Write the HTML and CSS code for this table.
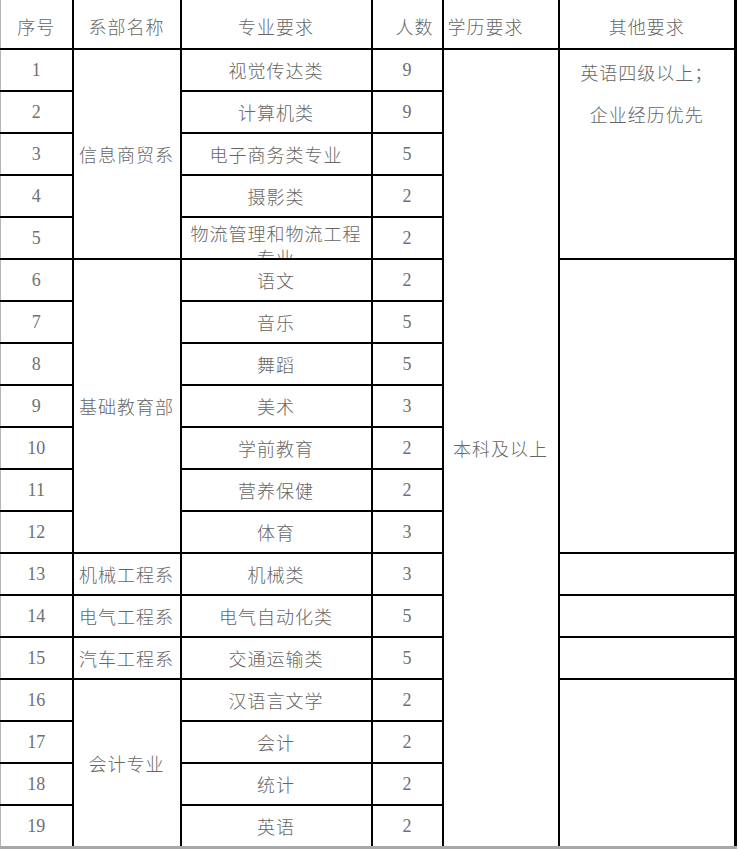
FILE: index.html
```html
<!DOCTYPE html>
<html lang="zh-CN">
<head>
<meta charset="utf-8">
<title>招聘岗位表</title>
<link rel="stylesheet" href="styles.css">
</head>
<body>
<table class="tbl">
  <colgroup>
    <col class="c1"><col class="c2"><col class="c3"><col class="c4"><col class="c5"><col class="c6">
  </colgroup>
  <thead>
    <tr class="head">
      <th>序号</th>
      <th>系部名称</th>
      <th>专业要求</th>
      <th class="h-num">人数</th>
      <th class="h-edu">学历要求</th>
      <th>其他要求</th>
    </tr>
  </thead>
  <tbody>
    <tr><td class="n">1</td><td rowspan="5">信息商贸系</td><td>视觉传达类</td><td class="n">9</td><td rowspan="19">本科及以上</td><td rowspan="5" class="other">英语四级以上；<br>企业经历优先</td></tr>
    <tr><td class="n">2</td><td>计算机类</td><td class="n">9</td></tr>
    <tr><td class="n">3</td><td>电子商务类专业</td><td class="n">5</td></tr>
    <tr><td class="n">4</td><td>摄影类</td><td class="n">2</td></tr>
    <tr><td class="n">5</td><td class="wrap"><div class="clip">物流管理和物流工程专业</div></td><td class="n">2</td></tr>
    <tr><td class="n">6</td><td rowspan="7">基础教育部</td><td>语文</td><td class="n">2</td><td rowspan="7"></td></tr>
    <tr><td class="n">7</td><td>音乐</td><td class="n">5</td></tr>
    <tr><td class="n">8</td><td>舞蹈</td><td class="n">5</td></tr>
    <tr><td class="n">9</td><td>美术</td><td class="n">3</td></tr>
    <tr><td class="n">10</td><td>学前教育</td><td class="n">2</td></tr>
    <tr><td class="n">11</td><td>营养保健</td><td class="n">2</td></tr>
    <tr><td class="n">12</td><td>体育</td><td class="n">3</td></tr>
    <tr><td class="n">13</td><td>机械工程系</td><td>机械类</td><td class="n">3</td><td></td></tr>
    <tr><td class="n">14</td><td>电气工程系</td><td>电气自动化类</td><td class="n">5</td><td></td></tr>
    <tr><td class="n">15</td><td>汽车工程系</td><td>交通运输类</td><td class="n">5</td><td></td></tr>
    <tr><td class="n">16</td><td rowspan="4">会计专业</td><td>汉语言文学</td><td class="n">2</td><td rowspan="4"></td></tr>
    <tr><td class="n">17</td><td>会计</td><td class="n">2</td></tr>
    <tr><td class="n">18</td><td>统计</td><td class="n">2</td></tr>
    <tr class="last"><td class="n">19</td><td>英语</td><td class="n">2</td></tr>
  </tbody>
</table>
</body>
</html>
```
FILE: styles.css
```css
html, body {
  margin: 0;
  padding: 0;
  background: #fff;
}
body {
  width: 740px;
  height: 850px;
  overflow: hidden;
}
.tbl {
  border-collapse: collapse;
  table-layout: fixed;
  width: 735px;
  border-left: 1px solid #b5b5b5;
  border-right: 3px solid #000;
  border-bottom: 3px solid #a8a8a8;
  font-family: "Noto Sans CJK SC", "Noto Sans", sans-serif;
  font-weight: 300;
  font-size: 18px;
  letter-spacing: 1px;
  color: #666;
}
.c1 { width: 72px; }
.c2 { width: 108px; }
.c3 { width: 191px; }
.c4 { width: 71px; }
.c5 { width: 116px; }
.c6 { width: 177px; }

.tbl th, .tbl td {
  border: 2px solid #000;
  padding: 0;
  text-align: center;
  vertical-align: middle;
  white-space: nowrap;
  overflow: hidden;
}
.tbl th {
  font-weight: 300;
  height: 44px;
  padding-top: 4px;
  border-top: none;
}
.tbl td {
  height: 40px;
  line-height: 24px;
}
.tbl tr > :first-child {
  border-left: none;
}
.tbl tr.last td {
  border-bottom: none;
}
.tbl th.h-num {
  text-align: right;
  padding-right: 8px;
}
.tbl th.h-edu {
  text-align: left;
  padding-left: 4px;
}
.tbl td.n {
  font-family: "Liberation Serif", "DejaVu Serif", serif;
  font-weight: 400;
  font-size: 18px;
  letter-spacing: 0;
  color: #707070;
}
.tbl td.other {
  vertical-align: top;
  line-height: 42px;
  padding-top: 1px;
}
.tbl td.wrap {
  white-space: normal;
  vertical-align: top;
}
.clip {
  height: 40px;
  overflow: hidden;
  line-height: 24px;
  padding: 3px 4px 0;
  box-sizing: border-box;
  white-space: normal;
  word-break: break-all;
}
```
